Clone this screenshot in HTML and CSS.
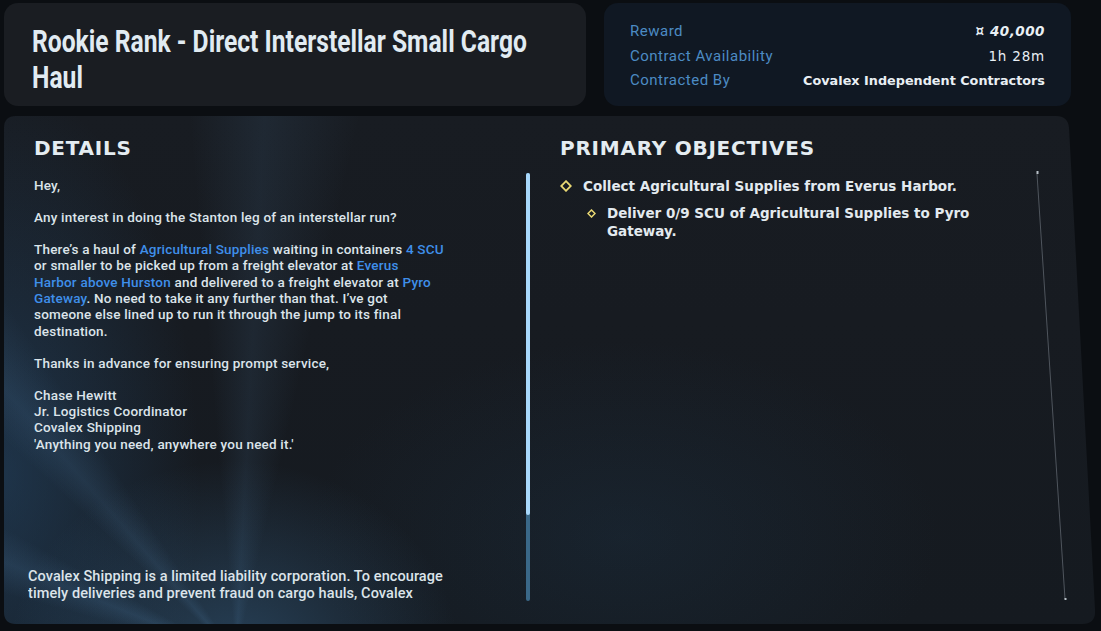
FILE: index.html
```html
<!DOCTYPE html>
<html lang="en">
<head>
<meta charset="utf-8">
<title>Contract</title>
<link rel="stylesheet" href="styles.css">
</head>
<body>
<div class="screen">
  <header class="top">
    <section class="title-card">
      <h1 class="title"><span class="title-text">Rookie Rank - Direct Interstellar Small Cargo<br>Haul</span></h1>
    </section>
    <section class="info-card">
      <div class="info-row"><span class="label">Reward</span><span class="value value-reward">¤ 40,000</span></div>
      <div class="info-row"><span class="label">Contract Availability</span><span class="value value-time">1h 28m</span></div>
      <div class="info-row"><span class="label">Contracted By</span><span class="value">Covalex Independent Contractors</span></div>
    </section>
  </header>

  <main class="panel">
    <section class="col">
      <h2 class="heading">DETAILS</h2>
      <div class="scroll">
        <div class="scroll-body">
          <p>Hey,</p>
          <p>Any interest in doing the Stanton leg of an interstellar run?</p>
          <p>There’s a haul of <span class="hl">Agricultural Supplies</span> waiting in containers <span class="hl">4 SCU</span><br>or smaller to be picked up from a freight elevator at <span class="hl">Everus</span><br><span class="hl">Harbor above Hurston</span> and delivered to a freight elevator at <span class="hl">Pyro</span><br><span class="hl">Gateway</span>. No need to take it any further than that. I’ve got<br>someone else lined up to run it through the jump to its final<br>destination.</p>
          <p>Thanks in advance for ensuring prompt service,</p>
          <p>Chase Hewitt<br>Jr. Logistics Coordinator<br>Covalex Shipping<br>'Anything you need, anywhere you need it.'</p>
          <p class="disclaimer">Covalex Shipping is a limited liability corporation. To encourage<br>timely deliveries and prevent fraud on cargo hauls, Covalex</p>
        </div>
        <div class="scrollbar"><div class="thumb"></div></div>
      </div>
    </section>

    <section class="col">
      <h2 class="heading">PRIMARY OBJECTIVES</h2>
      <ul class="obj-list">
        <li class="obj">
          <svg class="diamond" width="12" height="12" viewBox="0 0 12 12"><polygon points="6,1.2 10.8,6 6,10.8 1.2,6" fill="none" stroke="#e9d873" stroke-width="1.8"/></svg>
          <span>Collect Agricultural Supplies from Everus Harbor.</span>
        </li>
        <li class="obj obj-sub">
          <svg class="diamond-sm" width="9" height="9" viewBox="0 0 9 9"><polygon points="4.5,1 8,4.5 4.5,8 1,4.5" fill="none" stroke="#e9d873" stroke-width="1.5"/></svg>
          <span>Deliver 0/9 SCU of Agricultural Supplies to Pyro<br>Gateway.</span>
        </li>
      </ul>
    </section>

    <svg class="edge-line" width="36" height="432" viewBox="0 0 36 432">
      <line x1="3" y1="3" x2="31" y2="428" stroke="#4f555d" stroke-width="1"/>
      <rect x="2.5" y="0" width="2" height="3" fill="#b9c1c8"/>
      <rect x="30.5" y="427" width="2" height="2" fill="#b9c1c8"/>
    </svg>
  </main>
</div>
</body>
</html>
```

FILE: styles.css
```css
html, body {
  margin: 0;
  padding: 0;
}

body {
  width: 1101px;
  height: 631px;
  overflow: hidden;
  background: #0b0e12;
  font-family: Roboto, "Noto Sans", sans-serif;
  color: #dde5eb;
}

.screen {
  display: flex;
  flex-direction: column;
  gap: 10px;
  padding: 3px 0 0 4px;
}

/* ---------- top bar ---------- */
.top {
  display: flex;
  gap: 18px;
  height: 103px;
}

.title-card {
  box-sizing: border-box;
  width: 582px;
  height: 103px;
  padding: 20px 20px 0 28px;
  background: #1a1d22;
  border-radius: 14px;
  overflow: hidden;
}

.title {
  margin: 0;
  font-family: Roboto, sans-serif;
  font-weight: 700;
  font-size: 32px;
  line-height: 36px;
  color: #e1ebf2;
  white-space: nowrap;
}

.title-text {
  display: inline-block;
  transform: scaleX(0.77);
  transform-origin: left top;
}

.info-card {
  box-sizing: border-box;
  width: 467px;
  height: 103px;
  padding: 16px 26px 0 26px;
  background: #101823;
  border-radius: 14px;
}

.info-row {
  display: flex;
  justify-content: space-between;
  align-items: center;
  height: 24.5px;
}

.label {
  font-size: 15px;
  letter-spacing: 0.5px;
  color: #4c8bc3;
}

.value {
  font-family: "DejaVu Sans", sans-serif;
  font-size: 12.8px;
  font-weight: 700;
  color: #e9eff4;
}

.value-reward {
  font-style: italic;
  font-size: 13.5px;
  letter-spacing: 0.5px;
}

.value-time {
  font-weight: 400;
  font-size: 13.5px;
  letter-spacing: 0.8px;
}

/* ---------- main panel ---------- */
.panel {
  position: relative;
  box-sizing: border-box;
  width: 1091px;
  height: 508px;
  padding: 20px 0 0 30px;
  display: grid;
  grid-template-columns: 496px 1fr;
  column-gap: 30px;
  clip-path: path('M12,0 H1052 Q1064,0 1065,12 L1091,494 Q1092,508 1078,508 H12 Q0,508 0,496 V12 Q0,0 12,0 Z');
  background:
    conic-gradient(from -75deg at 232px 540px, transparent 0deg, rgba(95,150,200,0.14) 7deg, transparent 14deg, transparent 28deg, rgba(95,150,200,0.12) 34deg, transparent 42deg, transparent 70deg, rgba(95,150,200,0.10) 78deg, transparent 88deg, transparent 360deg),
    radial-gradient(ellipse 300px 260px at 230px 540px, rgba(64,118,165,0.42), transparent 75%),
    radial-gradient(ellipse 260px 520px at 0px 360px, rgba(40,82,122,0.45), transparent 75%),
    radial-gradient(ellipse 420px 260px at 620px 420px, rgba(35,70,100,0.20), transparent 75%),
    linear-gradient(180deg, #181c22 0%, #171b21 40%, #151a20 100%);
}

.col {
  display: flex;
  flex-direction: column;
  min-width: 0;
}

.heading {
  margin: 0 0 13px 0;
  font-family: "DejaVu Sans", sans-serif;
  font-weight: 700;
  font-size: 20px;
  line-height: 24px;
  letter-spacing: 0.75px;
  color: #e4ecf1;
}

/* details scroll area */
.scroll {
  display: flex;
  height: 428px;
  margin-left: -6px;
}

.scroll-body {
  flex: 1;
  overflow: hidden;
  padding: 4px 0 0 6px;
  font-size: 13.5px;
  font-weight: 500;
  line-height: 16.4px;
  letter-spacing: 0.2px;
  color: #dce4ea;
  white-space: nowrap;
}

.scroll-body p {
  margin: 0 0 15.5px 0;
}

.hl {
  color: #3f8fea;
}

.scroll-body .disclaimer {
  margin: 116px 0 0 -6px;
  font-size: 14.5px;
  line-height: 17px;
  letter-spacing: 0.08px;
}

.scrollbar {
  width: 4px;
  height: 428px;
  background: #3a6888;
  border-radius: 2px;
}

.thumb {
  height: 342px;
  background: #a8d8fb;
  border-radius: 2px;
}

/* objectives */
.obj-list {
  list-style: none;
  margin: 0;
  padding: 4px 0 0 0;
}

.obj {
  display: flex;
  align-items: flex-start;
  gap: 11px;
  font-family: "DejaVu Sans", sans-serif;
  font-size: 13.5px;
  font-weight: 700;
  line-height: 18px;
  color: #e3eaef;
}

.diamond {
  flex: none;
  margin-top: 3px;
}

.obj-sub {
  margin-top: 9px;
  padding-left: 27px;
}

.diamond-sm {
  flex: none;
  margin-top: 4.5px;
}

.edge-line {
  position: absolute;
  left: 1030px;
  top: 55px;
}
```
